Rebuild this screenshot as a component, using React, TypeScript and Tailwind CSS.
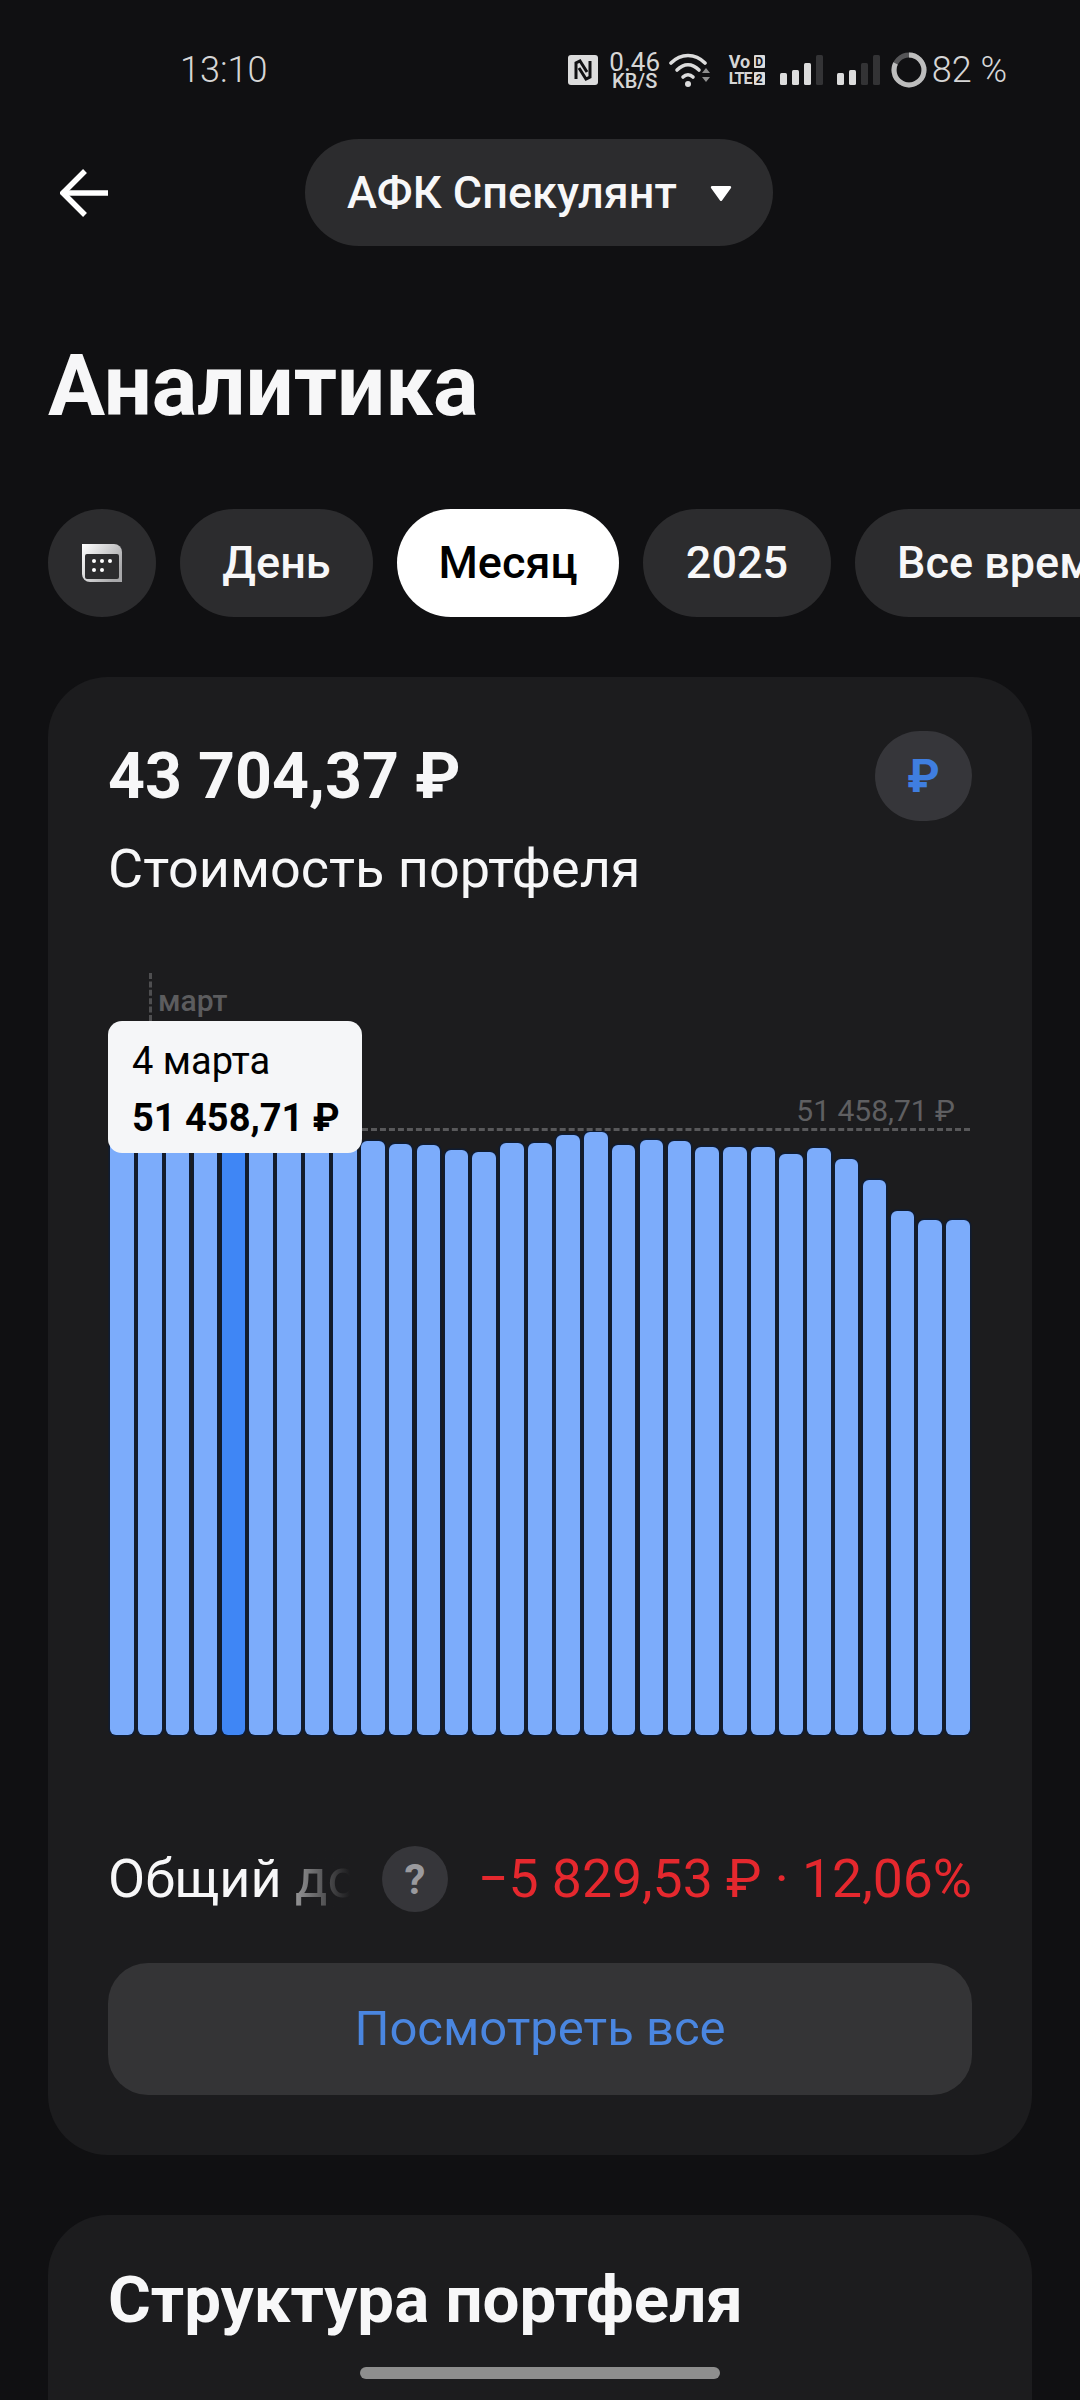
const tops = [1140,1140,1140,1140,1140,1140,1140,1140,1140,1141,1144,1145,1150,1152,1143,1143,1135,1132,1145,1140,1141,1147,1147,1147,1154,1148,1159,1180,1211,1220,1220];

function Signal({ active }: { active: number }) {
  const heights = [12, 15, 22, 30];
  return (
    <svg width="43" height="30" viewBox="0 0 43 30" className="shrink-0">
      {heights.map((h, i) => (
        <rect key={i} x={i * 12} y={30 - h} width="7" height={h} rx="1.5" fill={i < active ? "#dcdcdc" : "#333335"} />
      ))}
    </svg>
  );
}

function StatusBar() {
  return (
    <div className="flex h-[139px] items-start pl-[180px] pr-[73px] pt-[50px] text-[#d6d6d6]">
      <span className="h-[40px] text-[36px] font-light leading-[40px]">13:10</span>
      <div className="ml-auto flex h-[40px] items-center">
        <svg width="30" height="30" viewBox="0 0 30 30" className="shrink-0">
          <rect width="30" height="30" rx="3" fill="#dcdcdc" />
          <path d="M8 24V8l4-2v0l7 11M22 6v16l-4 2-7-11" fill="none" stroke="#111113" strokeWidth="3" />
        </svg>
        <div className="ml-[12px] flex w-[50px] flex-col items-center">
          <span className="text-[26px] leading-[21px]">0.46</span>
          <span className="text-[20px] font-medium leading-[16px]">KB/S</span>
        </div>
        <svg width="42" height="36" viewBox="0 0 42 36" className="ml-[9px] shrink-0" fill="none" stroke="#dcdcdc" strokeWidth="3.6" strokeLinecap="round">
          <path d="M2 11C12 1 26 1 36 11" />
          <path d="M8 18C15 11 23 11 30 18" />
          <path d="M14 25C17 22 21 22 24 25" />
          <circle cx="19" cy="32" r="3" fill="#dcdcdc" stroke="none" />
          <path d="M33 21l4-5 4 5zM33 25l8 0-4 5z" fill="#8f8f8f" stroke="none" />
        </svg>
        <div className="ml-[18px] flex w-[36px] shrink-0 flex-col gap-[4px] font-bold">
          <div className="flex h-[13px] items-center justify-between">
            <span className="text-[18px] leading-[13px]">Vo</span>
            <span className="flex h-[13px] w-[11px] items-center justify-center rounded-[1px] bg-[#dcdcdc] text-[12px] leading-none text-[#111113]">D</span>
          </div>
          <div className="flex h-[13px] items-center justify-between">
            <span className="text-[16px] leading-[13px] tracking-[-1px]">LTE</span>
            <span className="flex h-[13px] w-[11px] items-center justify-center rounded-[1px] bg-[#dcdcdc] text-[12px] leading-none text-[#111113]">2</span>
          </div>
        </div>
        <div className="ml-[15px]"><Signal active={3} /></div>
        <div className="ml-[14px]"><Signal active={2} /></div>
        <svg width="36" height="36" viewBox="0 0 36 36" className="ml-[11px] shrink-0">
          <circle cx="18" cy="18" r="15" fill="none" stroke="#555557" strokeWidth="5" />
          <circle cx="18" cy="18" r="15" fill="none" stroke="#bdbdbd" strokeWidth="5" strokeDasharray="77 94.2" transform="rotate(-90 18 18)" />
        </svg>
        <span className="ml-[5px] whitespace-nowrap text-[36px] font-light leading-[40px]">82 %</span>
      </div>
    </div>
  );
}

function Header() {
  return (
    <div className="flex h-[107px] items-center">
      <svg width="48" height="48" viewBox="0 0 48 48" className="ml-[60px] shrink-0" fill="none" stroke="#ffffff" strokeWidth="5.5">
        <path d="M48 24H3" />
        <path d="M25 2L3 24l22 22" />
      </svg>
      <div className="ml-[197px] flex h-[107px] w-[468px] items-center rounded-full bg-[#2c2c2e] pl-[42px]">
        <span className="whitespace-nowrap text-[45px] font-medium leading-none text-[#f7f7f8]">АФК Спекулянт</span>
        <svg width="22" height="17" viewBox="0 0 22 17" className="ml-[33px] mt-[2px] shrink-0">
          <path d="M2 1h18c1 0 1.500 1 1 2L12 15.500c-.5.7-1.500.7-2 0L1 3C.5 2 1 1 2 1z" fill="#ffffff" />
        </svg>
      </div>
    </div>
  );
}

function Chips() {
  return (
    <div className="flex h-[108px] gap-[24px] overflow-hidden pl-[48px]">
      <div className="flex w-[108px] shrink-0 items-center justify-center rounded-full bg-[#2c2c2e]">
        <svg width="42" height="40" viewBox="0 0 42 40">
          <defs>
            <linearGradient id="cal" x1="0" y1="0" x2="1" y2="0.6">
              <stop offset="0" stopColor="#ffffff" />
              <stop offset="1" stopColor="#a8a8aa" />
            </linearGradient>
          </defs>
          <path d="M1 1h32a8 8 0 0 1 8 8v30H9a8 8 0 0 1-8-8z" fill="url(#cal)" />
          <rect x="4" y="11" width="34" height="25" rx="2" fill="#2c2c2e" />
          <g fill="#ffffff">
            <circle cx="13" cy="18" r="2" /><circle cx="21" cy="18" r="2" /><circle cx="29" cy="18" r="2" />
            <circle cx="13" cy="27" r="2" /><circle cx="21" cy="27" r="2" />
          </g>
        </svg>
      </div>
      <div className="flex w-[193px] shrink-0 items-center justify-center rounded-full bg-[#2c2c2e] text-[45px] font-medium text-[#f7f7f8]">День</div>
      <div className="flex w-[222px] shrink-0 items-center justify-center rounded-full bg-white text-[45px] font-medium text-black">Месяц</div>
      <div className="flex w-[188px] shrink-0 items-center justify-center rounded-full bg-[#2c2c2e] text-[45px] font-medium text-[#f7f7f8]">2025</div>
      <div className="flex w-[300px] shrink-0 items-center whitespace-nowrap rounded-full bg-[#2c2c2e] pl-[42px] text-[45px] font-medium text-[#f7f7f8]">Все время</div>
    </div>
  );
}

function Chart() {
  return (
    <div className="relative mt-[74px] h-[762px] w-full">
      <div className="flex h-full items-end justify-between px-[2px]">
        {tops.map((t, i) => (
          <div
            key={i}
            className={`w-[23.7px] rounded-[6px] shadow-[0_0_0_1.500px_#0f1c33] ${i === 4 ? "bg-[#3f86f5]" : "bg-[#7cacfb]"}`}
            style={{ height: 1735 - t }}
          />
        ))}
      </div>
      <div className="absolute left-[41px] top-0 h-[48px] border-l-[3px] border-dashed border-[#4e4e50]" />
      <span className="absolute left-[50px] top-[8px] text-[30px] font-medium leading-[40px] text-[#5c5c5e]">март</span>
      <div className="absolute left-[254px] right-[2px] top-[155px] border-t-[3px] border-dashed border-[#58585a]" />
      <span className="absolute right-[17px] top-[120px] text-[30px] leading-[36px] text-[#5f5f61]">51 458,71 ₽</span>
      <div className="absolute left-0 top-[48px] flex h-[132px] w-[254px] flex-col rounded-[14px] bg-[#f5f6f8] pl-[24px] pt-[17px] text-black">
        <span className="text-[38px] leading-[46px]">4 марта</span>
        <span className="mt-[11px] whitespace-nowrap text-[38px] font-bold leading-[46px]">51 458,71 ₽</span>
      </div>
    </div>
  );
}

function Summary() {
  return (
    <div className="mt-[111px] flex h-[66px] items-center">
      <div className="relative h-[66px] w-[242px] overflow-hidden whitespace-nowrap text-[54px] leading-[66px] text-[#f7f7f8]">
        Общий доход
        <div className="absolute inset-y-0 right-0 w-[60px] bg-gradient-to-r from-[#1c1c1e]/40 to-[#1c1c1e]" />
      </div>
      <div className="ml-[32px] flex h-[66px] w-[66px] shrink-0 items-center justify-center rounded-full bg-[#36363a] text-[42px] font-bold text-[#9a9a9e]">?</div>
      <span className="ml-auto whitespace-nowrap text-[53.5px] leading-[66px] text-[#e5282e]">−5 829,53 ₽ · 12,06%</span>
    </div>
  );
}

export default function App() {
  return (
    <div className="relative h-[2400px] w-[1080px] overflow-hidden bg-[#101012] font-['Roboto',sans-serif]">
      <StatusBar />
      <Header />
      <div className="flex h-[263px] items-center pl-[48px] pt-[18px]">
        <h1 className="text-[85px] font-bold leading-none text-[#f7f7f8]">Аналитика</h1>
      </div>
      <Chips />
      <div className="ml-[48px] mt-[60px] w-[984px] rounded-[60px] bg-[#1c1c1e] px-[60px] pb-[60px] pt-[54px]">
        <div className="flex h-[90px] items-center justify-between">
          <span className="text-[64.5px] font-bold leading-none text-[#f7f7f8]">43 704,37 ₽</span>
          <div className="flex h-[90px] w-[97px] items-center justify-center rounded-full bg-[#36363a] text-[46px] font-bold text-[#3f7ee0]">₽</div>
        </div>
        <div className="mt-[18px] h-[60px] text-[54px] leading-[60px] text-[#f7f7f8]">Стоимость портфеля</div>
        <Chart />
        <Summary />
        <div className="mt-[51px] flex h-[132px] items-center justify-center rounded-[40px] bg-[#343436] text-[49px] text-[#4a86e0]">Посмотреть все</div>
      </div>
      <div className="ml-[48px] mt-[60px] h-[300px] w-[984px] rounded-t-[60px] bg-[#1c1c1e] px-[60px] pt-[45px]">
        <h2 className="whitespace-nowrap text-[65.5px] font-bold leading-[80px] text-[#f7f7f8]">Структура портфеля</h2>
      </div>
      <div className="absolute bottom-[21px] left-[360px] h-[12px] w-[360px] rounded-full bg-[#8e8e8e]" />
    </div>
  );
}
